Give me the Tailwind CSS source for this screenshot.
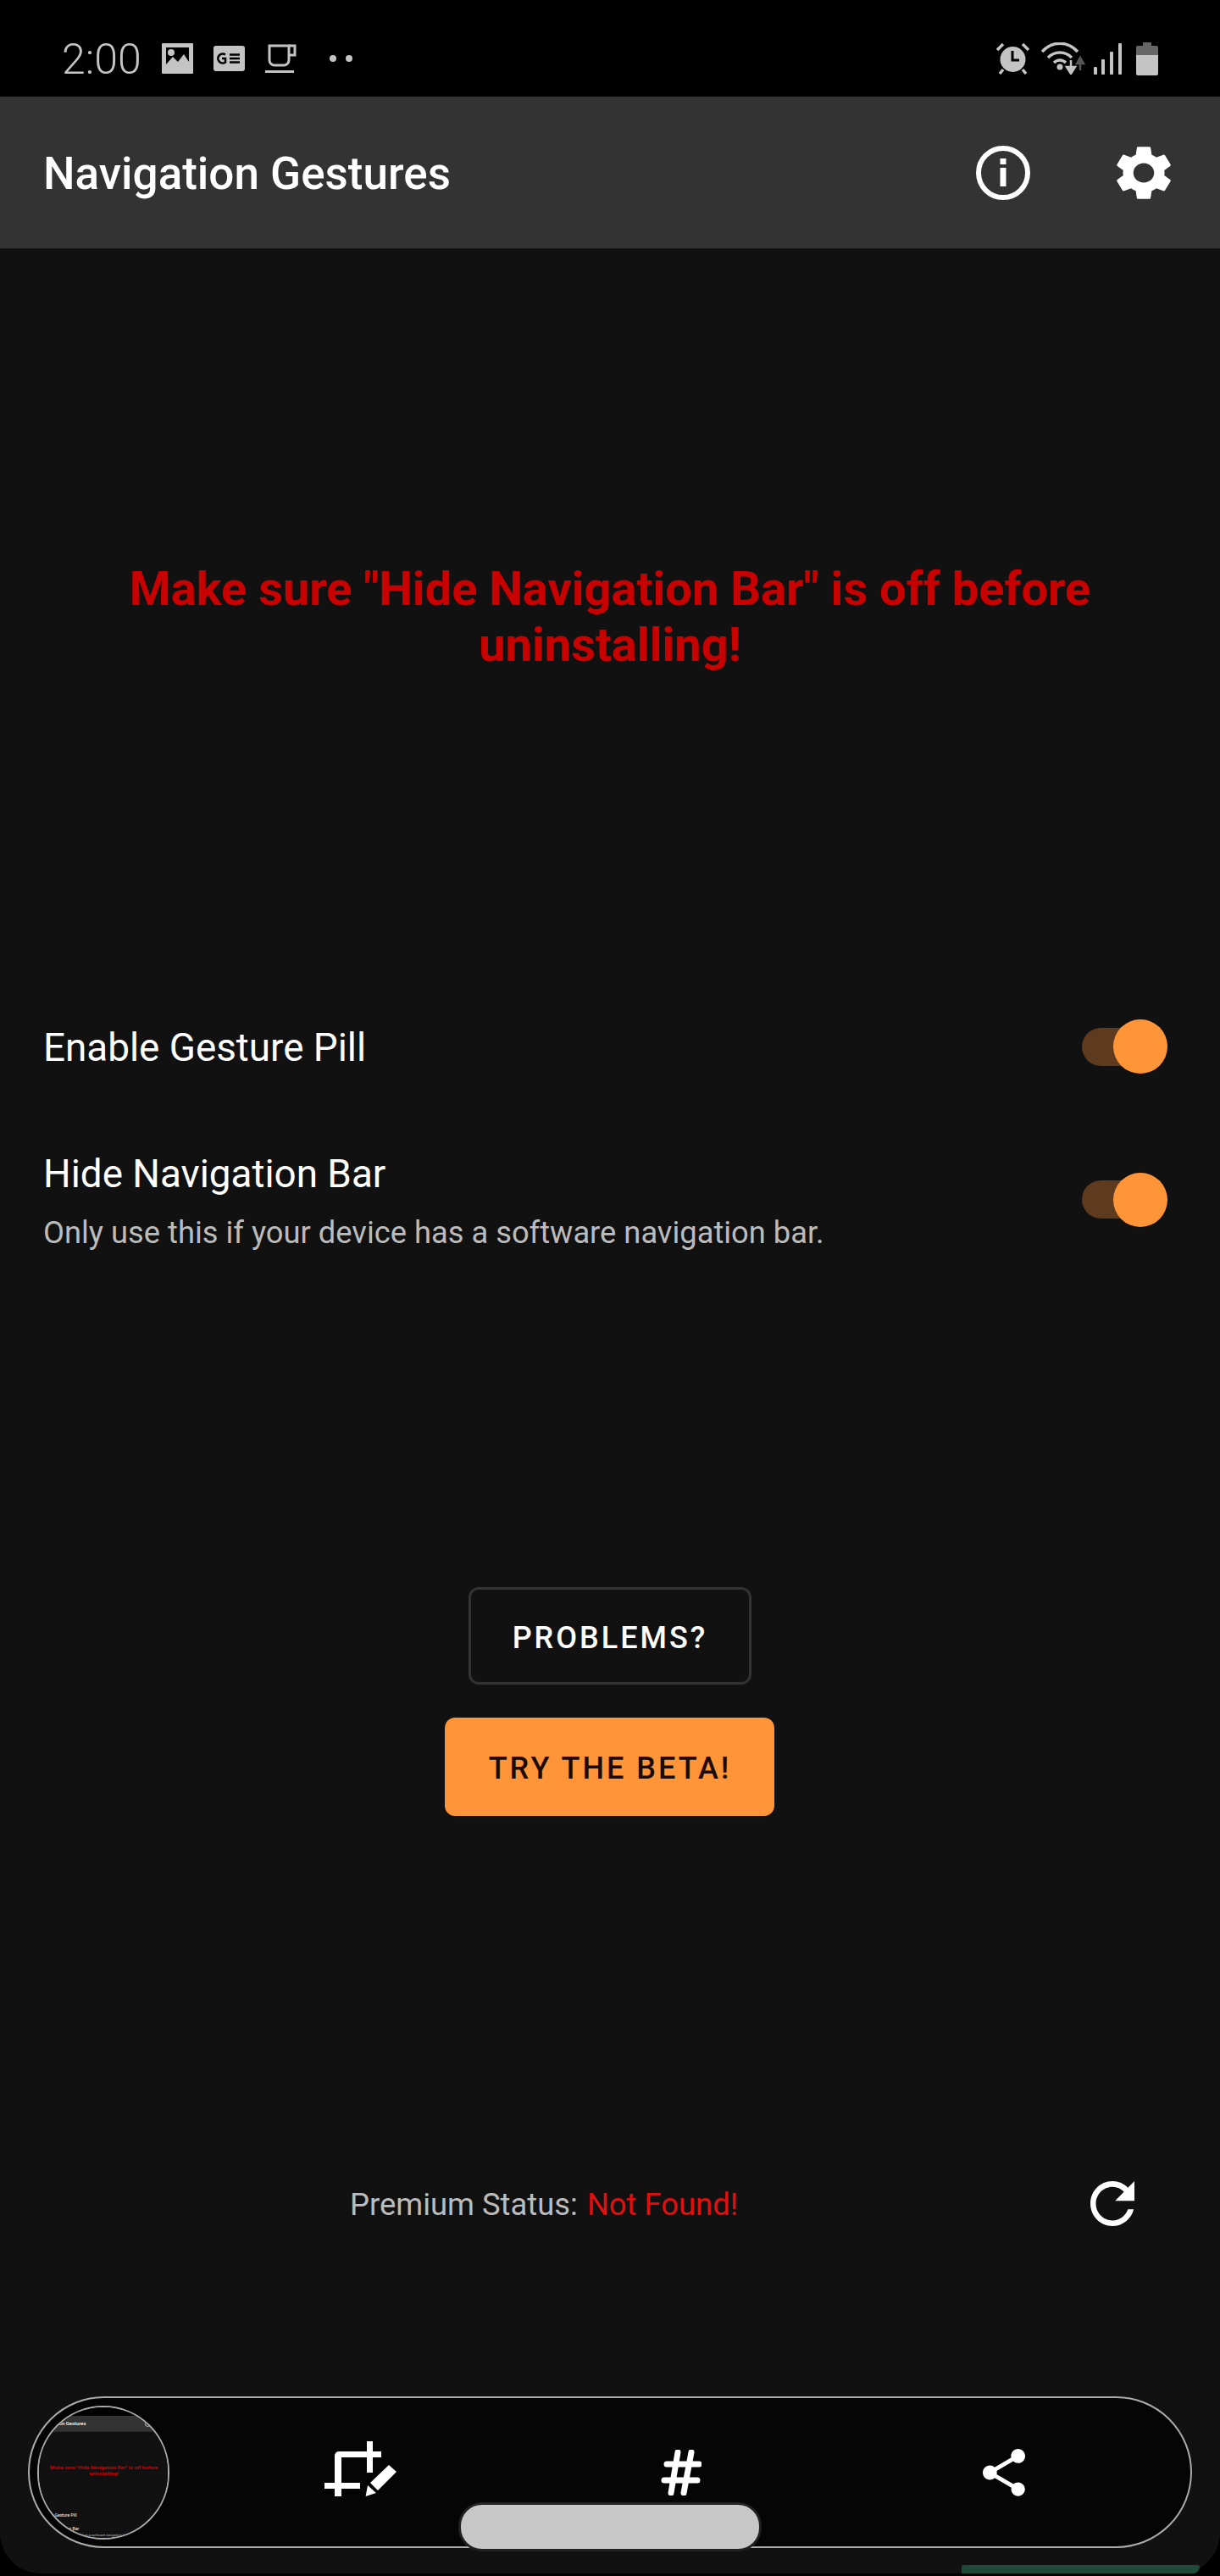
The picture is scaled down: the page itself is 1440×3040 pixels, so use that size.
<!DOCTYPE html>
<html lang="en">
<head>
    <meta charset="UTF-8">
    <meta name="viewport" content="width=device-width, initial-scale=1.0">
    <script src="https://cdn.jsdelivr.net/npm/@tailwindcss/browser@4"></script>
    <title>Navigation Gestures</title>
</head>
<body class="bg-black [font-family:Roboto,sans-serif]">
<div class="relative w-[1440px] h-[3040px] bg-black overflow-hidden">
    <div class="flex flex-col w-full h-[3037px] bg-[#111111] rounded-b-[48px] overflow-hidden">

        <!-- status bar -->
        <div class="flex items-center h-[114px] pt-[24px] pl-[73px] pr-[73px] bg-black text-[#c4c4c4]">
            <span class="pt-[2px] text-[50px] font-light leading-none w-[118px]">2:00</span>
            <svg class="w-[37px] h-[36px]" viewBox="0 0 37 36">
                <path fill="#c4c4c4" fill-rule="evenodd" d="M1 0h35a1 1 0 0 1 1 1v34a1 1 0 0 1-1 1H1a1 1 0 0 1-1-1V1a1 1 0 0 1 1-1zM5 5v20l8-9 6 6 7-9 6 9V5z"/>
                <circle cx="11" cy="11" r="4" fill="#c4c4c4"/>
            </svg>
            <svg class="w-[37px] h-[30px] ml-[24px]" viewBox="0 0 37 30">
                <rect width="37" height="30" rx="3" fill="#c4c4c4"/>
                <path d="M14 10.5a5.5 5.5 0 1 0 0 9v-4.500h-4" fill="none" stroke="#000" stroke-width="2.600"/>
                <path d="M19 10.500h12M19 15h12M19 19.500h12" stroke="#000" stroke-width="2.400"/>
            </svg>
            <svg class="w-[37px] h-[34px] ml-[24px]" viewBox="0 0 37 34">
                <path d="M5 2h23v17a6 6 0 0 1-6 6H11a6 6 0 0 1-6-6z" fill="none" stroke="#c4c4c4" stroke-width="3"/>
                <path d="M28 2h7v11h-7" fill="none" stroke="#c4c4c4" stroke-width="3"/>
                <rect y="31" width="34" height="3" fill="#c4c4c4"/>
            </svg>
            <div class="flex gap-[11px] ml-[39px]">
                <span class="w-[8px] h-[8px] rounded-full bg-[#c4c4c4]"></span>
                <span class="w-[8px] h-[8px] rounded-full bg-[#c4c4c4]"></span>
            </div>
            <div class="flex items-center ml-auto">
                <svg class="w-[41px] h-[38px]" viewBox="0 0 41 38">
                    <circle cx="20.500" cy="20" r="15" fill="#c4c4c4"/>
                    <path d="M20 10v11h8" fill="none" stroke="#000" stroke-width="3"/>
                    <path d="M2 9l7-7M39 9l-7-7M9 32l-4 5M32 32l4 5" stroke="#c4c4c4" stroke-width="3.500"/>
                </svg>
                <svg class="w-[52px] h-[38px] ml-[13px]" viewBox="0 0 52 38">
                    <path d="M1 11c12-13 30-13 42 0M8 18c8-8 20-8 28 0M15 24c4-4 10-4 14 0" fill="none" stroke="#c4c4c4" stroke-width="3.500"/>
                    <circle cx="22" cy="29" r="3.500" fill="#c4c4c4"/>
                    <path d="M35 21v13M30 29l5 8 5-8z" stroke="#c4c4c4" stroke-width="2.500" fill="#c4c4c4"/>
                    <path d="M46 33V21M42 25l4-7 4 7z" stroke="#555" stroke-width="2.500" fill="#555"/>
                </svg>
                <svg class="w-[33px] h-[37px] ml-[10px]" viewBox="0 0 33 37">
                    <rect x="0" y="28" width="4" height="9" rx="1" fill="#c4c4c4"/>
                    <rect x="9" y="19" width="4" height="18" rx="1" fill="#c4c4c4"/>
                    <rect x="19" y="10" width="4" height="27" rx="1" fill="#c4c4c4"/>
                    <rect x="29" y="0" width="4" height="37" rx="1" fill="#c4c4c4"/>
                </svg>
                <svg class="w-[26px] h-[39px] ml-[17px]" viewBox="0 0 26 39">
                    <path d="M8 0h10v4h6a2 2 0 0 1 2 2v9H0V6a2 2 0 0 1 2-2h6z" fill="#666"/>
                    <path d="M0 15h26v22a2 2 0 0 1-2 2H2a2 2 0 0 1-2-2z" fill="#c4c4c4"/>
                </svg>
            </div>
        </div>

        <!-- app bar -->
        <div class="flex items-center h-[179px] pl-[51px] pr-[58px] bg-[#333333]">
            <h1 class="pt-[3px] text-[53px] font-medium leading-none text-white">Navigation Gestures</h1>
            <svg class="w-[64px] h-[64px] ml-auto" viewBox="0 0 64 64">
                <circle cx="32" cy="32" r="29" fill="none" stroke="#fff" stroke-width="6"/>
                <rect x="28.500" y="15" width="7" height="7" fill="#fff"/>
                <rect x="28.500" y="26" width="7" height="22" fill="#fff"/>
            </svg>
            <svg class="w-[64px] h-[64px] ml-[102px]" viewBox="2.600 2 18.800 20" preserveAspectRatio="none">
                <path fill="#fff" d="M19.140 12.940c.04-.3.06-.61.06-.94 0-.32-.02-.64-.07-.94l2.030-1.580c.18-.14.23-.41.12-.61l-1.920-3.320c-.12-.22-.37-.29-.59-.22l-2.390.96c-.5-.38-1.030-.7-1.620-.94l-.36-2.540c-.04-.24-.24-.41-.48-.41h-3.840c-.24 0-.43.17-.47.41l-.36 2.540c-.59.24-1.130.57-1.620.94l-2.390-.96c-.22-.08-.47 0-.59.22L2.740 8.870c-.12.21-.08.47.12.61l2.030 1.580c-.05.3-.09.63-.09.94s.02.64.07.94l-2.030 1.580c-.18.14-.23.41-.12.61l1.920 3.320c.12.22.37.29.59.22l2.390-.96c.5.38 1.030.7 1.620.94l.36 2.540c.05.24.24.41.48.41h3.840c.24 0 .44-.17.47-.41l.36-2.540c.59-.24 1.130-.56 1.620-.94l2.390.96c.22.08.47 0 .59-.22l1.920-3.320c.12-.22.07-.47-.12-.61l-2.010-1.580zM12 15.600c-1.980 0-3.600-1.620-3.600-3.600s1.620-3.600 3.600-3.600 3.600 1.620 3.600 3.600-1.620 3.600-3.600 3.600z"/>
            </svg>
        </div>

        <!-- warning -->
        <p class="mt-[369px] px-[140px] text-center text-[56px] leading-[66px] font-bold text-[#c90000]">Make sure "Hide Navigation Bar" is off before uninstalling!</p>

        <!-- switches -->
        <div class="flex items-center justify-between h-[64px] mt-[409px] pl-[51px] pr-[62px]">
            <span class="pt-[3px] text-[45.800px] leading-[60px] text-white">Enable Gesture Pill</span>
            <div class="relative flex items-center w-[101px] h-[64px]">
                <div class="w-[80px] h-[45px] rounded-full bg-[#5e3b1f]"></div>
                <div class="absolute right-0 top-0 w-[64px] h-[64px] rounded-full bg-[#ff9538]"></div>
            </div>
        </div>
        <div class="flex items-center justify-between mt-[89px] pl-[51px] pr-[62px]">
            <div class="flex flex-col gap-[14px]">
                <span class="text-[45.800px] leading-[60px] text-white">Hide Navigation Bar</span>
                <span class="text-[36.300px] leading-[50px] text-[#bcbcbc]">Only use this if your device has a software navigation bar.</span>
            </div>
            <div class="relative flex items-center w-[101px] h-[64px] -mt-[5px]">
                <div class="w-[80px] h-[45px] rounded-full bg-[#5e3b1f]"></div>
                <div class="absolute right-0 top-0 w-[64px] h-[64px] rounded-full bg-[#ff9538]"></div>
            </div>
        </div>

        <!-- buttons -->
        <button class="self-center w-[334px] h-[115px] mt-[393px] pt-[5px] rounded-[12px] border-[3px] border-[#333333] text-[36px] font-medium tracking-[3px] text-white">PROBLEMS?</button>
        <button class="self-center w-[389px] h-[116px] mt-[39px] pt-[3px] pl-[2px] -translate-x-[1px] rounded-[12px] bg-[#ff9538] text-[36px] font-medium tracking-[3px] text-[#1d0a05]">TRY THE BETA!</button>

        <!-- premium status -->
        <div class="flex items-center justify-between h-[53px] mt-[431px] pl-[413px] pr-[101px]">
            <span class="pt-[4px] text-[36.400px] leading-none text-[#bcbcbc]">Premium Status: <span class="ml-[2px] text-[#e01010]">Not Found!</span></span>
            <svg class="w-[52px] h-[53px]" viewBox="4 4 16 16" preserveAspectRatio="none">
                <path fill="#fff" d="M17.650 6.350C16.200 4.900 14.210 4 12 4c-4.420 0-7.990 3.580-7.990 8s3.570 8 7.990 8c3.730 0 6.840-2.550 7.730-6h-2.080c-.82 2.330-3.040 4-5.650 4-3.310 0-6-2.690-6-6s2.690-6 6-6c1.660 0 3.140.69 4.220 1.780L13 11h7V4l-2.350 2.350z"/>
            </svg>
        </div>
    </div>

    <!-- screenshot toolbar, floats over the page -->
    <div class="absolute left-[33px] top-[2828px] flex items-center w-[1374px] h-[179px] pl-[9px] rounded-full border-2 border-[#aaaaaa] bg-[#050505]">
        <div class="relative shrink-0 w-[156px] h-[158px] rounded-full border-2 border-[#aaaaaa] bg-[#111111] overflow-hidden">
            <div class="absolute -left-[4px] -top-[2px] flex flex-col w-[1440px] h-[1500px] bg-[#111111] origin-top-left [transform:scale(.112,.105)]">
                <div class="h-[114px] bg-black"></div>
                <div class="flex items-center justify-between h-[179px] pl-[51px] pr-[58px] bg-[#333333]">
                    <span class="text-[53px] font-medium text-white">Navigation Gestures</span>
                    <span class="w-[64px] h-[64px] mr-[166px] rounded-full border-[6px] border-white"></span>
                </div>
                <p class="mt-[369px] px-[140px] text-center text-[56px] leading-[66px] font-bold text-[#c90000]">Make sure "Hide Navigation Bar" is off before uninstalling!</p>
                <span class="mt-[412px] pl-[51px] text-[46px] leading-[60px] text-white">Enable Gesture Pill</span>
                <span class="mt-[90px] pl-[51px] text-[46px] leading-[60px] text-white">Hide Navigation Bar</span>
                <span class="mt-[14px] pl-[51px] text-[36.500px] leading-[50px] text-[#bcbcbc]">Only use this if your device has a software navigation bar.</span>
            </div>
        </div>
        <svg class="shrink-0 w-[85px] h-[65px] ml-[183px] -mt-[8px]" viewBox="0 0 85 65">
            <path fill="#fff" d="M17 12h33V0h7v12h10v7H20v30h22v7H20v9h-8v-9H0v-7h12V17a5 5 0 0 1 5-5z"/>
            <path fill="#fff" d="M50 19h7v18h-7z"/>
            <path fill="#fff" d="M76 28l9 8-22 22-9-9zM51 52l10 9-12.400 4z"/>
        </svg>
        <svg class="shrink-0 w-[48px] h-[54px] ml-[312px]" viewBox="0 0 48 54" fill="none" stroke="#fff" stroke-width="7" stroke-linecap="round">
            <path d="M7 17h38M4 36h39M20 3l-8 48M36 3l-9 48"/>
        </svg>
        <svg class="shrink-0 w-[50px] h-[56px] ml-[332px]" viewBox="3 2 18 20" preserveAspectRatio="none">
            <path fill="#fff" d="M18 16.080c-.76 0-1.440.3-1.960.77L8.910 12.700c.05-.23.09-.46.09-.7s-.04-.47-.09-.7l7.050-4.110c.54.5 1.250.81 2.040.81 1.660 0 3-1.340 3-3s-1.340-3-3-3-3 1.340-3 3c0 .24.04.47.09.7L8.040 9.810C7.500 9.310 6.790 9 6 9c-1.660 0-3 1.340-3 3s1.340 3 3 3c.79 0 1.500-.31 2.040-.81l7.120 4.160c-.05.21-.08.43-.08.65 0 1.610 1.310 2.920 2.920 2.920 1.610 0 2.920-1.310 2.920-2.920s-1.310-2.920-2.920-2.920z"/>
        </svg>
    </div>

    <!-- nav handle and the sliver of a toast under it -->
    <div class="absolute left-[541px] top-[2953px] w-[358px] h-[58px] rounded-[28px] border-[3px] border-[#222222] bg-[#c8c8c8]"></div>
    <div class="absolute left-[1135px] top-[3027px] w-[281px] h-[10px] rounded-t-[8px] rounded-br-[24px] bg-[#1f4a3a]"></div>
</div>
</body>
</html>
